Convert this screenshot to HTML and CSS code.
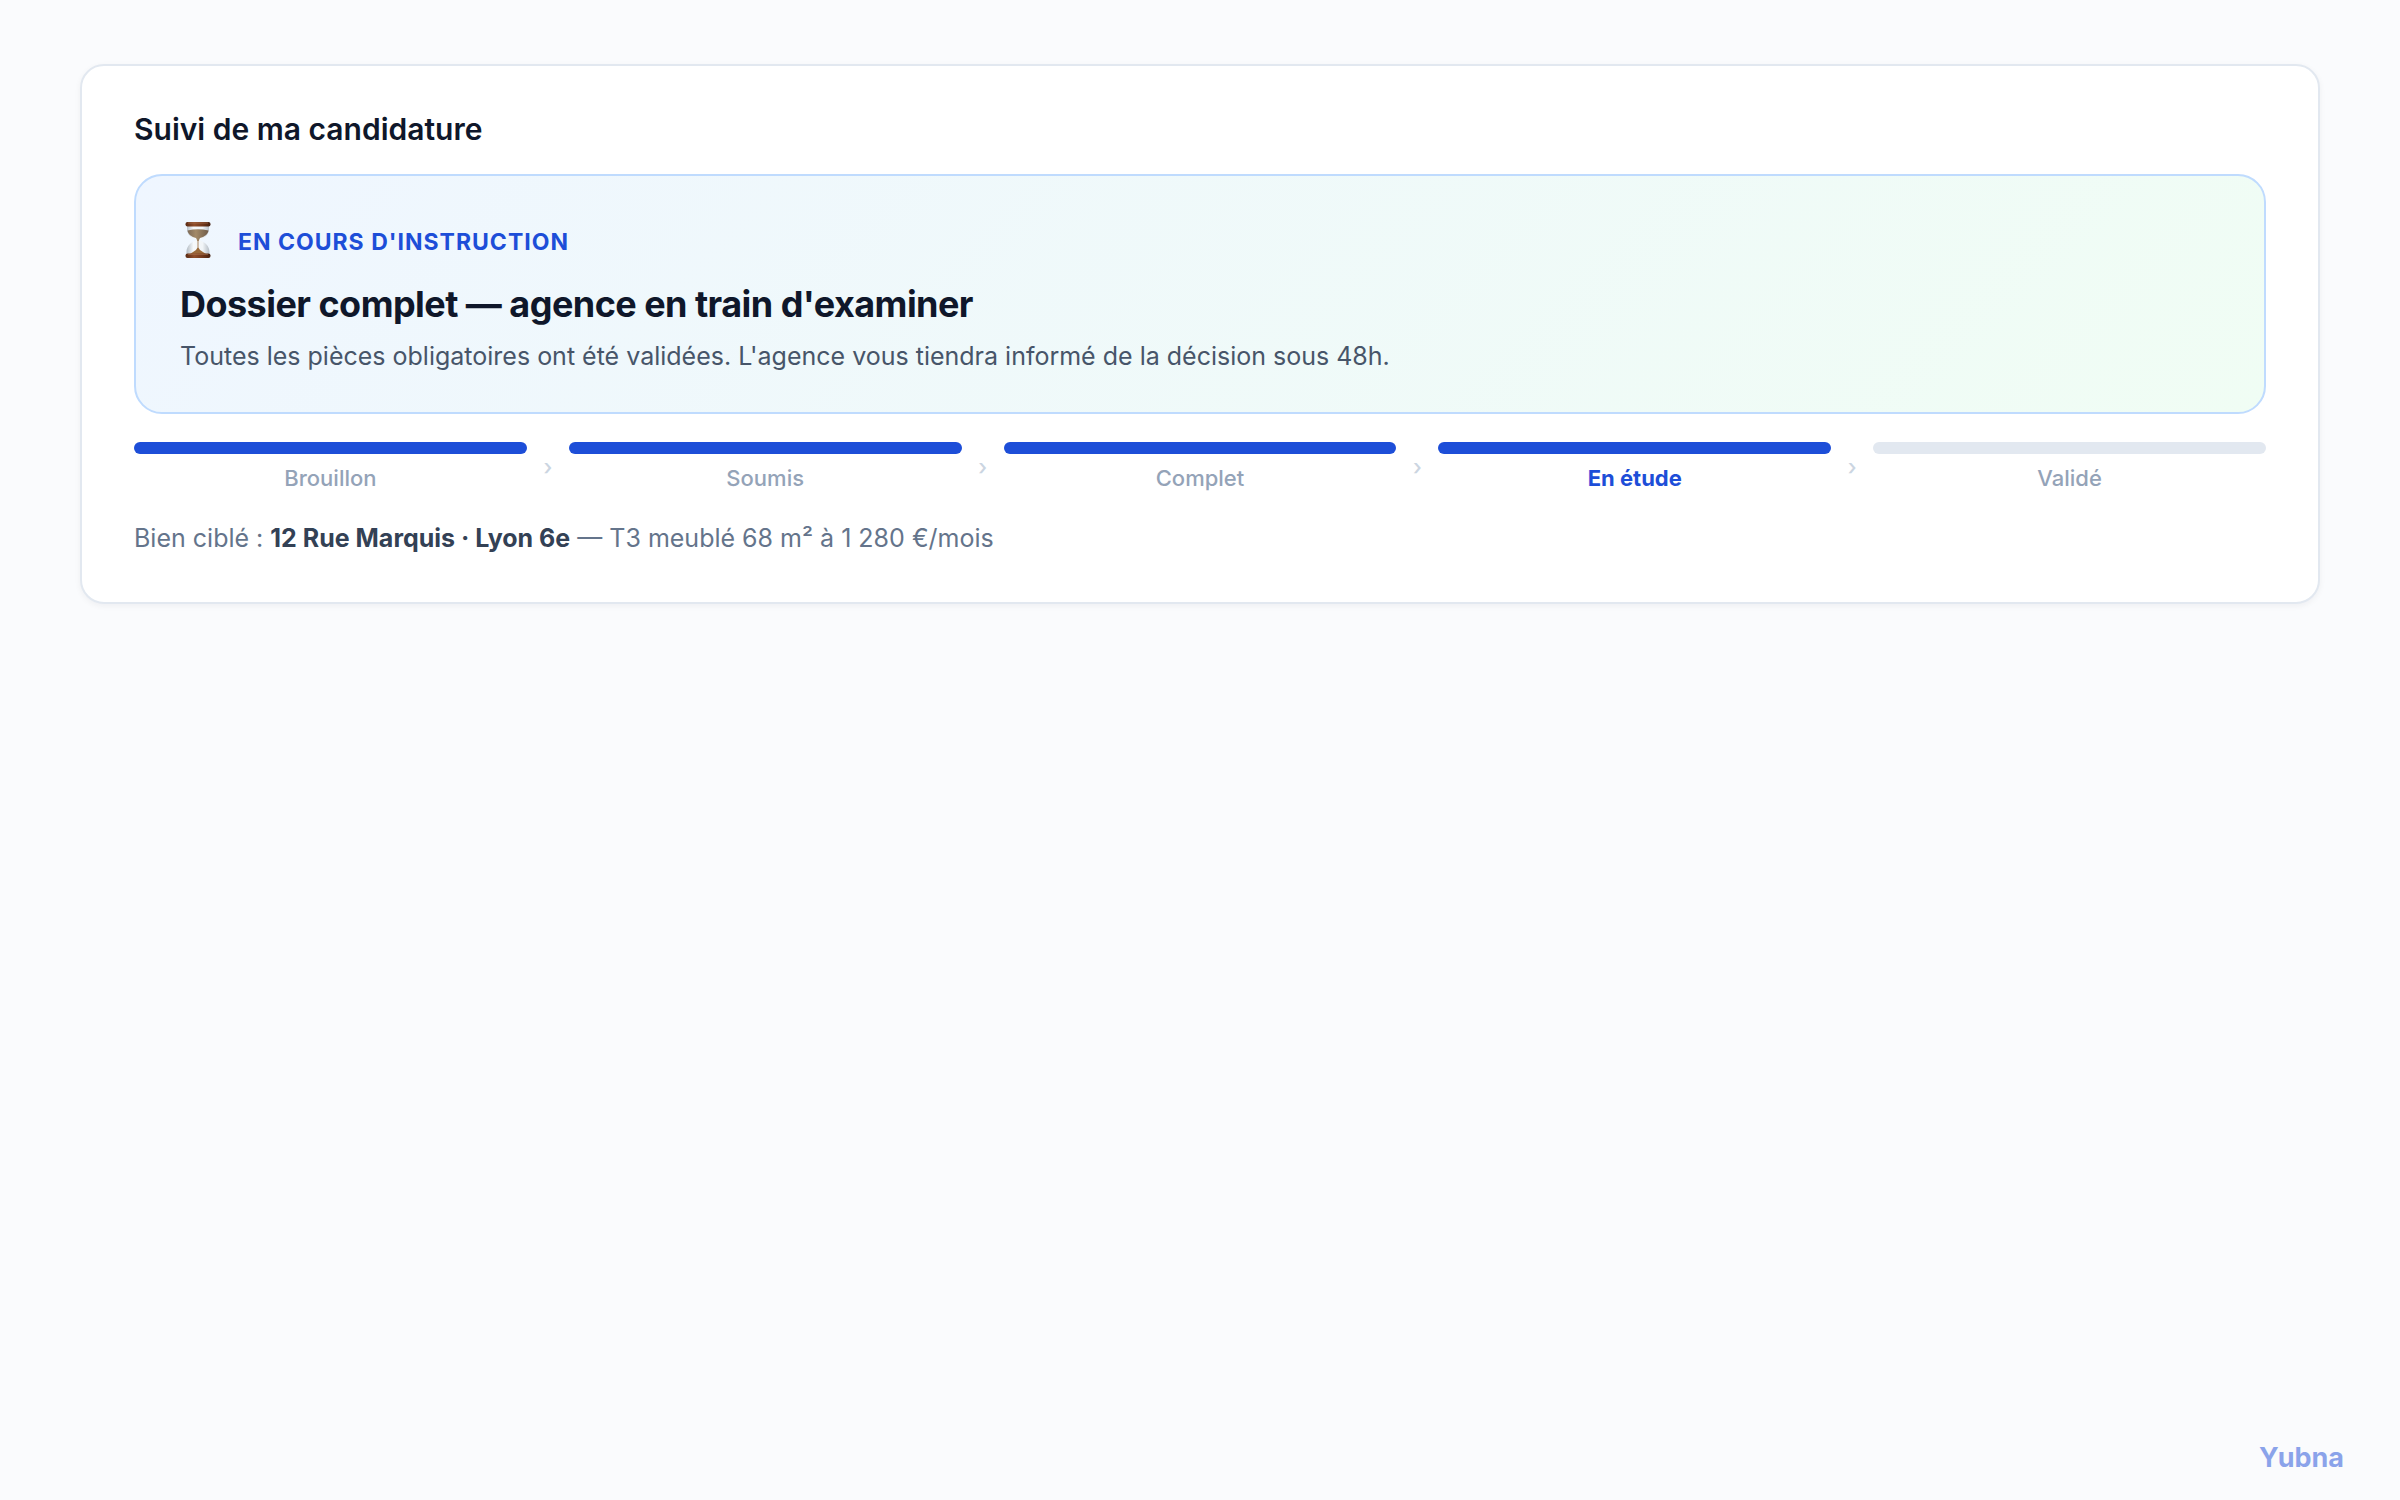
FILE: index.html
```html
<!DOCTYPE html>
<html lang="fr">
<head>
    <meta charset="UTF-8">
    <meta name="viewport" content="width=device-width, initial-scale=1.0">
    <title>Suivi de ma candidature</title>
    <link rel="stylesheet" href="styles.css">
</head>
<body>
    <main class="card">
        <h1 class="card-title">Suivi de ma candidature</h1>

        <section class="status">
            <div class="status-head">
                <svg class="status-icon" viewBox="0 0 36 36" aria-hidden="true">
                    <defs>
                        <linearGradient id="wood" x1="0" x2="1" y1="0" y2="0">
                            <stop offset="0" stop-color="#5a2a14"/>
                            <stop offset="0.35" stop-color="#8f4d2a"/>
                            <stop offset="0.7" stop-color="#6f361a"/>
                            <stop offset="1" stop-color="#44200f"/>
                        </linearGradient>
                        <linearGradient id="sandTop" x1="0" x2="1" y1="0" y2="0">
                            <stop offset="0" stop-color="#7d6a58"/>
                            <stop offset="0.4" stop-color="#a38a68"/>
                            <stop offset="1" stop-color="#6f5c49"/>
                        </linearGradient>
                        <linearGradient id="glass" x1="0" x2="1" y1="0" y2="0">
                            <stop offset="0" stop-color="#b4bcc4"/>
                            <stop offset="0.3" stop-color="#f6f9fb"/>
                            <stop offset="0.7" stop-color="#f1f5f8"/>
                            <stop offset="1" stop-color="#b4bcc4"/>
                        </linearGradient>
                    </defs>
                    <path fill="url(#glass)" d="M7 4h22v3c0 5-4 9-10 11 6 2 10.500 6 10.500 12v2h-23v-2c0-6 4.500-10 10.500-12C11 16 7 12 7 7z"/>
                    <path fill="url(#sandTop)" d="M7.500 8.500q10.500-2.500 21 0c-.5 3.500-4 6.500-8.500 7.500l-1.500 3h-1l-1.500-3C11.500 15 8 12 7.500 8.500z"/>
                    <path fill="#9a6a3a" d="M17.600 18h.8v7.500l1.600 2.500 6 4H10l6-4 1.600-2.500z"/>
                    <rect fill="url(#wood)" x="5.500" y="0" width="25" height="4.500" rx="2"/>
                    <rect fill="url(#wood)" x="5.500" y="31.500" width="25" height="4.500" rx="2"/>
                    <path stroke="#b27a54" stroke-width=".6" d="M8 1h20M8 32.300h20"/>
                </svg>
                <span class="status-label">En cours d'instruction</span>
            </div>
            <h2 class="status-title">Dossier complet — agence en train d'examiner</h2>
            <p class="status-text">Toutes les pièces obligatoires ont été validées. L'agence vous tiendra informé de la décision sous 48h.</p>
        </section>

        <ol class="steps">
            <li class="step done">Brouillon</li>
            <li class="arrow" aria-hidden="true">›</li>
            <li class="step done">Soumis</li>
            <li class="arrow" aria-hidden="true">›</li>
            <li class="step done">Complet</li>
            <li class="arrow" aria-hidden="true">›</li>
            <li class="step done current" aria-current="step">En étude</li>
            <li class="arrow" aria-hidden="true">›</li>
            <li class="step">Validé</li>
        </ol>

        <p class="target">Bien ciblé : <strong>12 Rue Marquis · Lyon 6e</strong> — T3 meublé 68 m² à 1 280 €/mois</p>
    </main>

    <footer class="brand">Yubna</footer>
</body>
</html>
```
FILE: styles.css
```css
* {
    margin: 0;
    padding: 0;
    box-sizing: border-box;
}

body {
    font-family: Inter, 'Liberation Sans', sans-serif;
    background: #fafbfd;
    color: #0f172a;
    min-height: 100vh;
    padding: 64px 80px 24px;
    display: flex;
    flex-direction: column;
    justify-content: space-between;
}

.card {
    background: #fff;
    border: 2px solid #e2e8f0;
    border-radius: 24px;
    padding: 44px 52px 46px;
    box-shadow: 0 2px 6px rgba(15, 23, 42, 0.05);
}

.card-title {
    font-size: 30px;
    line-height: 38px;
    font-weight: 600;
    margin-bottom: 26px;
}

.status {
    background: linear-gradient(135deg, #eff6ff, #f0fdf4);
    border: 2px solid #bfdbfe;
    border-radius: 28px;
    padding: 46px 44px 38px;
    margin-bottom: 28px;
}

.status-head {
    display: flex;
    align-items: flex-end;
    gap: 22px;
    margin-bottom: 24px;
}

.status-icon {
    width: 36px;
    height: 36px;
}

.status-label {
    font-size: 23px;
    line-height: 32px;
    font-weight: 700;
    letter-spacing: 1px;
    text-transform: uppercase;
    color: #1d4ed8;
}

.status-title {
    font-size: 36px;
    line-height: 44px;
    font-weight: 700;
    letter-spacing: -0.015em;
    margin-bottom: 12px;
}

.status-text {
    font-size: 25px;
    line-height: 36px;
    color: #475569;
}

.steps {
    display: flex;
    align-items: center;
    gap: 12px;
    list-style: none;
    margin-bottom: 28px;
}

.step {
    flex: 1;
    font-size: 22px;
    line-height: 28px;
    font-weight: 500;
    text-align: center;
    color: #94a3b8;
}

/* progress bar above the step name */
.step::before {
    content: "";
    display: block;
    height: 12px;
    border-radius: 6px;
    background: #e2e8f0;
    margin-bottom: 10px;
}

.step.done::before {
    background: #1d4ed8;
}

.step.current {
    color: #1d4ed8;
    font-weight: 700;
}

.arrow {
    width: 18px;
    font-size: 22px;
    line-height: 28px;
    font-weight: 500;
    text-align: center;
    color: #cbd5e1;
}

.target {
    font-size: 25px;
    line-height: 36px;
    color: #64748b;
}

.target strong {
    color: #334155;
    font-weight: 700;
}

.brand {
    align-self: flex-end;
    margin-right: -24px;
    font-size: 27px;
    line-height: 36px;
    font-weight: 700;
    color: #1d4ed8;
    opacity: 0.5;
}
```
